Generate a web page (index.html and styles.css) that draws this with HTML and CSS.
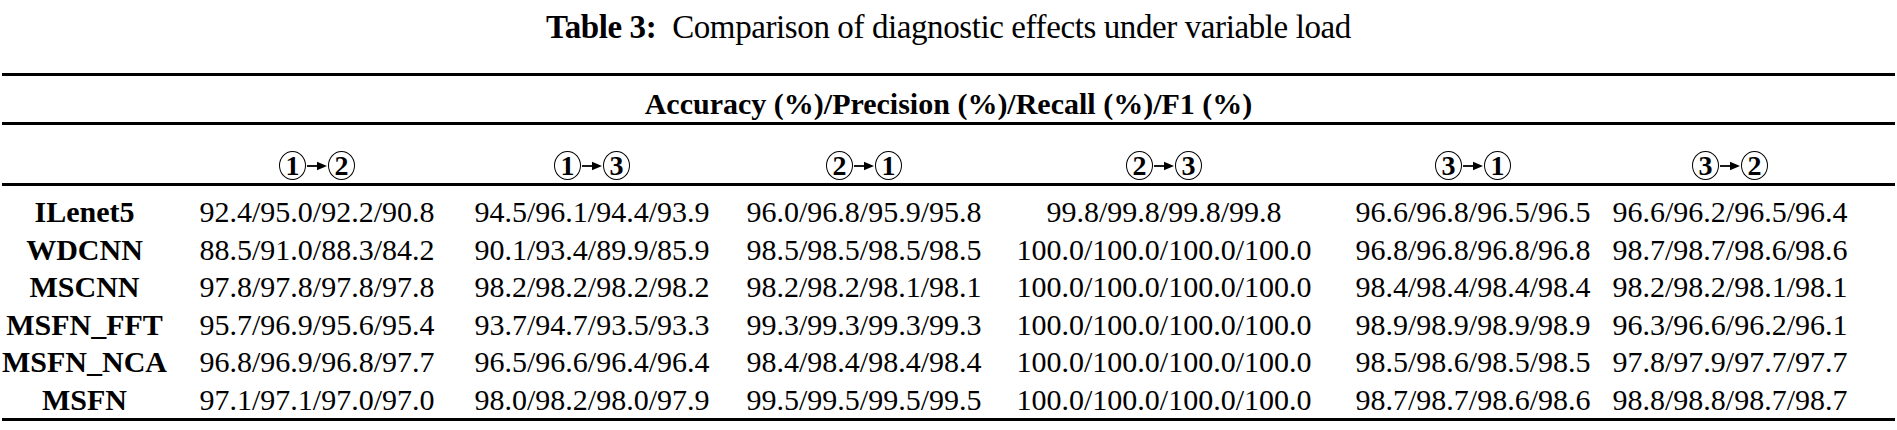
FILE: index.html
```html
<!DOCTYPE html>
<html lang="en">
<head>
<meta charset="utf-8">
<title>Table 3</title>
<link rel="stylesheet" href="styles.css">
</head>
<body>
<div class="page">
  <h1 class="title"><span class="title-label">Table 3:</span> Comparison of diagnostic effects under variable load</h1>
  <div class="table">
    <div class="metric-row">Accuracy (%)/Precision (%)/Recall (%)/F1 (%)</div>
    <div class="grid head-row">
      <div class="cell"></div>
      <div class="cell"><span class="pair"><span class="circ">1</span><svg class="arrow" viewBox="0 0 20 12" width="20" height="12"><line x1="0" y1="6" x2="13" y2="6" stroke="#000" stroke-width="1.8"/><polygon points="10,1.8 20,6 10,10.2" fill="#000"/></svg><span class="circ">2</span></span></div>
      <div class="cell"><span class="pair"><span class="circ">1</span><svg class="arrow" viewBox="0 0 20 12" width="20" height="12"><line x1="0" y1="6" x2="13" y2="6" stroke="#000" stroke-width="1.8"/><polygon points="10,1.8 20,6 10,10.2" fill="#000"/></svg><span class="circ">3</span></span></div>
      <div class="cell"><span class="pair"><span class="circ">2</span><svg class="arrow" viewBox="0 0 20 12" width="20" height="12"><line x1="0" y1="6" x2="13" y2="6" stroke="#000" stroke-width="1.8"/><polygon points="10,1.8 20,6 10,10.2" fill="#000"/></svg><span class="circ">1</span></span></div>
      <div class="cell"><span class="pair"><span class="circ">2</span><svg class="arrow" viewBox="0 0 20 12" width="20" height="12"><line x1="0" y1="6" x2="13" y2="6" stroke="#000" stroke-width="1.8"/><polygon points="10,1.8 20,6 10,10.2" fill="#000"/></svg><span class="circ">3</span></span></div>
      <div class="cell"><span class="pair"><span class="circ">3</span><svg class="arrow" viewBox="0 0 20 12" width="20" height="12"><line x1="0" y1="6" x2="13" y2="6" stroke="#000" stroke-width="1.8"/><polygon points="10,1.8 20,6 10,10.2" fill="#000"/></svg><span class="circ">1</span></span></div>
      <div class="cell"><span class="pair"><span class="circ">3</span><svg class="arrow" viewBox="0 0 20 12" width="20" height="12"><line x1="0" y1="6" x2="13" y2="6" stroke="#000" stroke-width="1.8"/><polygon points="10,1.8 20,6 10,10.2" fill="#000"/></svg><span class="circ">2</span></span></div>
    </div>
    <div class="grid body">
      <div class="label">ILenet5</div><div>92.4/95.0/92.2/90.8</div><div>94.5/96.1/94.4/93.9</div><div>96.0/96.8/95.9/95.8</div><div>99.8/99.8/99.8/99.8</div><div>96.6/96.8/96.5/96.5</div><div>96.6/96.2/96.5/96.4</div>
      <div class="label">WDCNN</div><div>88.5/91.0/88.3/84.2</div><div>90.1/93.4/89.9/85.9</div><div>98.5/98.5/98.5/98.5</div><div>100.0/100.0/100.0/100.0</div><div>96.8/96.8/96.8/96.8</div><div>98.7/98.7/98.6/98.6</div>
      <div class="label">MSCNN</div><div>97.8/97.8/97.8/97.8</div><div>98.2/98.2/98.2/98.2</div><div>98.2/98.2/98.1/98.1</div><div>100.0/100.0/100.0/100.0</div><div>98.4/98.4/98.4/98.4</div><div>98.2/98.2/98.1/98.1</div>
      <div class="label">MSFN_FFT</div><div>95.7/96.9/95.6/95.4</div><div>93.7/94.7/93.5/93.3</div><div>99.3/99.3/99.3/99.3</div><div>100.0/100.0/100.0/100.0</div><div>98.9/98.9/98.9/98.9</div><div>96.3/96.6/96.2/96.1</div>
      <div class="label">MSFN_NCA</div><div>96.8/96.9/96.8/97.7</div><div>96.5/96.6/96.4/96.4</div><div>98.4/98.4/98.4/98.4</div><div>100.0/100.0/100.0/100.0</div><div>98.5/98.6/98.5/98.5</div><div>97.8/97.9/97.7/97.7</div>
      <div class="label">MSFN</div><div>97.1/97.1/97.0/97.0</div><div>98.0/98.2/98.0/97.9</div><div>99.5/99.5/99.5/99.5</div><div>100.0/100.0/100.0/100.0</div><div>98.7/98.7/98.6/98.6</div><div>98.8/98.8/98.7/98.7</div>
    </div>
  </div>
</div>
</body>
</html>
```
FILE: styles.css
```css
html, body {
  margin: 0;
  padding: 0;
  background: #ffffff;
}

body {
  font-family: "Liberation Serif", "Times New Roman", serif;
  color: #000;
}

.page {
  width: 1897px;
  height: 430px;
  overflow: hidden;
}

.title {
  margin: 0;
  height: 73px;
  padding-top: 8px;
  box-sizing: border-box;
  text-align: center;
  font-size: 33px;
  letter-spacing: -0.4px;
  font-weight: normal;
  line-height: 38px;
}

.title-label {
  font-weight: bold;
  margin-right: 8px;
}

.table {
  margin-left: 2px;
  width: 1893px;
  border-top: 3px solid #000;
  border-bottom: 3px solid #000;
  font-size: 30px;
}

.metric-row {
  height: 49px;
  box-sizing: border-box;
  padding-top: 5px;
  line-height: 45px;
  text-align: center;
  font-weight: bold;
  border-bottom: 3px solid #000;
}

.grid {
  display: grid;
  grid-template-columns: 188px 254px 296px 248px 352px 266px 248px;
}

.head-row {
  height: 58px;
  border-bottom: 3px solid #000;
  box-sizing: content-box;
}

.head-row .cell {
  display: flex;
  align-items: flex-end;
  justify-content: center;
  padding-bottom: 3px;
}

.pair {
  display: inline-flex;
  align-items: center;
  gap: 1px;
}

.circ {
  display: inline-flex;
  align-items: center;
  justify-content: center;
  width: 25px;
  height: 26px;
  border: 1.5px solid #000;
  border-radius: 50%;
  font-weight: bold;
  font-size: 28px;
  line-height: 1;
  padding-top: 1px;
  box-sizing: content-box;
}

.arrow {
  display: block;
}

.body {
  padding-top: 7px;
  line-height: 37.5px;
  text-align: center;
}

.label {
  font-weight: bold;
  padding-right: 23px;
}
```
